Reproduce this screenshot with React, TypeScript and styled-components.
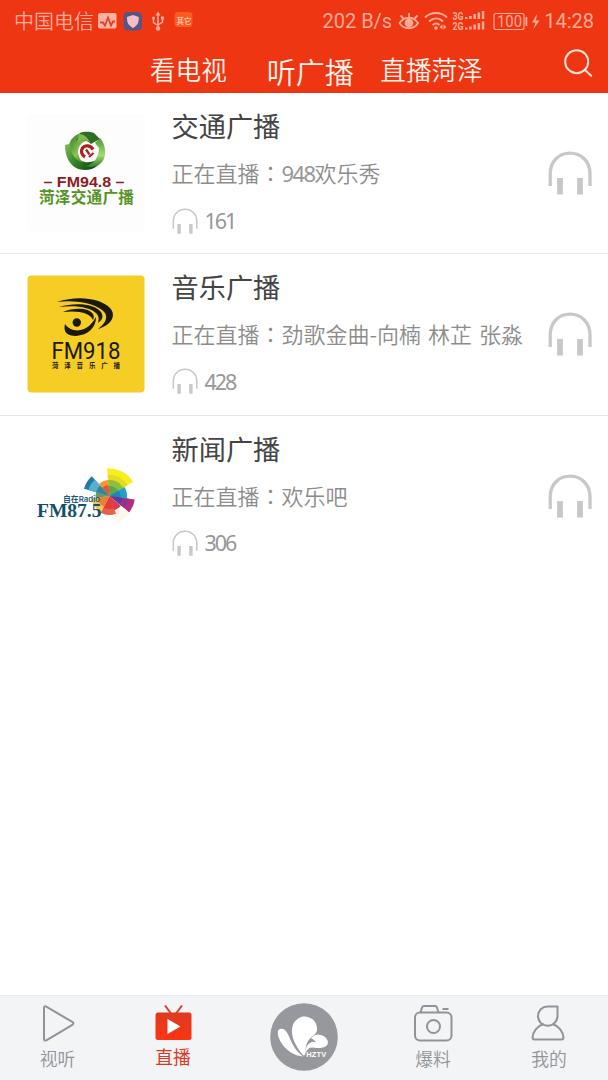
import React from 'react';
import styled, { createGlobalStyle } from 'styled-components';

const Global = createGlobalStyle`
  * { box-sizing: border-box; }
  body { margin: 0; background: #fff; }
`;

const cjk = `'Noto Sans CJK SC', sans-serif`;

const Screen = styled.div`
  display: flex;
  flex-direction: column;
  width: 608px;
  height: 1080px;
  background: #fff;
  font-family: ${cjk};
  font-weight: 350;
  overflow: hidden;
`;

const Header = styled.header`
  height: 92.5px;
  background: #ee3613;
  display: flex;
  flex-direction: column;
`;

const StatusBar = styled.div`
  height: 41px;
  padding: 0 14px 0 14px;
  display: flex;
  align-items: center;
  justify-content: space-between;
  color: #ffab98;
  svg { display: block; }
`;

const StatusGroup = styled.div`
  display: flex;
  align-items: center;
`;

const Carrier = styled.span`
  font-size: 20px;
  line-height: 24px;
  margin-right: 4px;
`;

const StatusText = styled.span<{ $gap: number }>`
  font-family: Roboto, sans-serif;
  font-weight: 400;
  font-size: 20px;
  line-height: 24px;
  margin-right: ${(p) => p.$gap}px;
`;

const NavBar = styled.nav`
  height: 51.5px;
  padding: 0 15px 0 150px;
  display: flex;
  align-items: flex-start;
  color: #fff3ea;
`;

const Tab = styled.a<{ $active?: boolean; $gap?: number }>`
  font-size: ${(p) => (p.$active ? 29 : 25.6)}px;
  line-height: 36px;
  padding-top: ${(p) => (p.$active ? 12 : 10)}px;
  margin-right: ${(p) => p.$gap ?? 0}px;
  white-space: nowrap;
`;

const SearchButton = styled.div`
  margin-left: auto;
  padding-top: 8px;
  svg { display: block; }
`;

const List = styled.main`
  flex: 1;
`;

const Row = styled.article<{ $last?: boolean }>`
  height: 161.5px;
  padding: 21px 16px 0 27px;
  display: flex;
  align-items: flex-start;
  border-bottom: ${(p) => (p.$last ? 'none' : '1px solid #e6e6e6')};
`;

const Cover = styled.div`
  width: 118px;
  height: 118px;
  margin-right: 26.5px;
  flex: none;
  svg { display: block; }
`;

const Info = styled.div`
  flex: 1;
  display: flex;
  flex-direction: column;
  margin-top: -9px;
`;

const Title = styled.h2`
  margin: 0;
  font-size: 27.2px;
  font-weight: 400;
  line-height: 40px;
  color: #444;
`;

const Program = styled.p`
  margin: 10px 0 0;
  font-size: 22px;
  line-height: 34px;
  color: #8c8c8c;
  white-space: nowrap;
  word-spacing: 2px;
`;

const Colon = styled.span`
  font-family: 'Noto Sans CJK TC', sans-serif;
`;

const Digits = styled.span`
  font-family: 'Noto Sans', ${cjk};
  font-weight: 400;
  letter-spacing: -1.6px;
  color: #979797;
`;

const Count = styled(Digits)`
  letter-spacing: -2px;
`;

const Listeners = styled.div`
  margin-top: 16px;
  height: 30px;
  display: flex;
  align-items: center;
  gap: 7px;
  font-size: 21.5px;
`;

const Listen = styled.div`
  margin-top: 37px;
  svg { display: block; }
`;

const TabBar = styled.footer`
  height: 85px;
  background: #f3f4f6;
  border-top: 1px solid #ececec;
  display: grid;
  grid-template-columns: 115px 116px 145px 114px 118px;
`;

const TabItem = styled.div<{ $active?: boolean; $top?: number }>`
  display: flex;
  flex-direction: column;
  align-items: center;
  padding-top: ${(p) => p.$top ?? 8}px;
  color: ${(p) => (p.$active ? '#d93a25' : '#919398')};
  svg { display: block; }
`;

const TabLabel = styled.span<{ $active?: boolean }>`
  font-size: 17.8px;
  line-height: 26px;
  margin-top: ${(p) => (p.$active ? -1 : 1)}px;
  font-weight: ${(p) => (p.$active ? 400 : 350)};
`;

function HeadphoneIcon({ size, small }: { size: number; small?: boolean }) {
  return (
    <svg width={size} height={size} viewBox="0 0 44 44" fill="none">
      <path d="M2.200 35V23C2.200 10 11 2.200 22 2.200s20 7.800 20 20.800v12" stroke="#c8c8c8" strokeWidth={small ? 2.6 : 3.3} />
      <path d="M12 27v16.500M32 27v16.500" stroke="#c8c8c8" strokeWidth="5.800" />
    </svg>
  );
}

function TrafficCover() {
  return (
    <svg width="118" height="118" viewBox="0 0 118 118">
      <defs>
        <linearGradient id="leaf" x1="0" y1="0" x2="1" y2="1">
          <stop offset="0" stopColor="#2f7a22" />
          <stop offset=".5" stopColor="#8cc457" />
          <stop offset="1" stopColor="#1c5c1c" />
        </linearGradient>
        <linearGradient id="leafBottom" x1="0" y1="0" x2="1" y2=".6">
          <stop offset="0" stopColor="#8fc65c" />
          <stop offset=".45" stopColor="#3c8a2c" />
          <stop offset="1" stopColor="#124616" />
        </linearGradient>
        <linearGradient id="leafRight" x1="0" y1="0" x2="0" y2="1">
          <stop offset="0" stopColor="#4b9a34" />
          <stop offset=".6" stopColor="#a6d873" />
          <stop offset="1" stopColor="#2c7a28" />
        </linearGradient>
      </defs>
      <rect width="118" height="118" rx="4" fill="#fdfdfd" />
      <path d="M38 31c0 14 7 25 20 25 10 0 16-6 18-14-6 5-13 7-18 6-9-2-13-11-10-21l-4-1-2 4z" fill="url(#leafBottom)" />
      <path d="M44 26c4-5 9-8 15-7l5 7c-8 0-12 5-13 11 0 5 2 9 5 12-9-3-15-13-12-23z" fill="url(#leaf)" />
      <path d="M53 19c5-2 11-1 14 0l6 6-9 5c-3-3-8-5-15-3z" fill="#2d6f24" />
      <path d="M52 20c5 0 8 3 11 8-4-2-9-2-13 0z" fill="#7fb94f" />
      <path d="M68 29l5-5c6 7 7 18 2 24-4 5-11 6-16 4 8-2 13-9 13-18z" fill="url(#leafRight)" />
      <circle cx="60.500" cy="38.500" r="9" fill="#fbfbf5" />
      <path d="M66 35.500c-2-4-8-5-10.500-1.500-2 3-1 7 2.500 9" fill="none" stroke="#a92126" strokeWidth="3.200" />
      <path d="M59 35.500l3.500 5M62 43l4.500-4" fill="none" stroke="#a92126" strokeWidth="2.200" />
      <text x="57" y="73" textAnchor="middle" fontFamily="Liberation Sans, sans-serif" fontWeight="700" fontSize="15" fill="#8c1c23" textLength="81" lengthAdjust="spacingAndGlyphs">– FM94.8 –</text>
      <text x="12" y="88.500" fontFamily={cjk} fontWeight="700" fontSize="15.700" fill="#559326" textLength="95">菏泽交通广播</text>
    </svg>
  );
}

function MusicCover() {
  return (
    <svg width="118" height="118" viewBox="0 0 118 118">
      <rect x=".5" y=".5" width="117" height="117" rx="4" fill="#f5cd24" />
      <g fill="#1b180c">
        <path d="M30 27C50 20 74 23 83 33c7 8 1 17-12 21 7-5 10-11 7-16C71 29 50 24.500 30 27z" />
        <path d="M32 32c17-5 36-3 42 5 3 5 1 8-3 11 1-4 1-6-1-9-6-7-22-9-38-7z" />
        <path d="M36 37c12-5 26-4 30 2 1 2 1 4 0 6-2-7-15-10-30-8z" />
        <circle cx="49.800" cy="47.500" r="4.200" />
        <path d="M38 49c4 6 12 8 19 5 5-2 9-7 12-12 0 11-8 18-20 19-9 0-13-4-11-12z" />
      </g>
      <text x="24.500" y="84" fill="#1b180c" fontFamily="Roboto, sans-serif" fontWeight="400" fontSize="24.500" textLength="69" lengthAdjust="spacingAndGlyphs">FM918</text>
      <text x="25" y="93" fontFamily={cjk} fontWeight="700" fontSize="6.500" fill="#1b180c" textLength="68">菏泽音乐广播</text>
    </svg>
  );
}

function wedge(r: number, a1: number, a2: number) {
  const p = (a: number) =>
    `${(r * Math.cos((a * Math.PI) / 180)).toFixed(2)} ${(r * Math.sin((a * Math.PI) / 180)).toFixed(2)}`;
  return `M0 0L${p(a1)}A${r} ${r} 0 0 1 ${p(a2)}Z`;
}

function NewsCover() {
  const wedges: [number, number, number, string][] = [
    [27.5, -95, -31, '#f8ee1c'],
    [21, -95, -31, '#e3dc22'],
    [16, -95, -31, '#8dbf3e'],
    [10, -95, -31, '#5aa648'],
    [17.5, -31, 8, '#1fa0cf'],
    [11, -31, 8, '#1a86bd'],
    [25.5, 8, 40, '#b32d80'],
    [19, 8, 40, '#8b3590'],
    [13, 8, 40, '#5c3c96'],
    [27, 40, 75, '#fef6ea'],
    [15, 40, 80, '#d83a5a'],
    [19, 70, 118, '#e8604a'],
    [13, 70, 118, '#dc4038'],
    [18, 118, 172, '#f7c25a'],
    [12, 118, 172, '#ee7f37'],
    [14, 172, 196, '#6b9d52'],
    [26.5, 196, 228, '#2579a8'],
    [22, 196, 228, '#55b2cc'],
    [14, 196, 228, '#2c86a8'],
    [16, 228, 265, '#f39a2d'],
    [11, 228, 265, '#e6573a'],
  ];
  return (
    <svg width="118" height="118" viewBox="0 0 118 118">
      <g transform="translate(82.500 59)">
        {wedges.map(([r, a, b, c]) => (
          <path key={`${r}-${a}`} d={wedge(r, a, b)} fill={c} />
        ))}
      </g>
      <text x="36" y="65" fontFamily={`Inter, ${cjk}`} fontWeight="600" fontSize="7.800" fill="#1e5974" textLength="37" lengthAdjust="spacingAndGlyphs">自在Radio</text>
      <text x="10" y="80" fontFamily="Liberation Serif, serif" fontWeight="700" fontSize="19.500" fill="#14506b" textLength="64.500" lengthAdjust="spacingAndGlyphs">FM87.5</text>
    </svg>
  );
}

function StatusLeftIcons() {
  return (
    <svg width="100" height="24" viewBox="98 8 100 24">
      <rect x="98" y="12" width="18.500" height="15.500" rx="2" fill="#ffb3a2" />
      <path d="M100 21.500h3l2 3 3-8 3 8 2-4h2" fill="none" stroke="#d9442c" strokeWidth="1.800" />
      <rect x="123.500" y="11" width="18.500" height="18.500" rx="4.500" fill="#575585" />
      <path d="M133 14l5.800 2c0 6-1 8-5.800 11-5-3-6-5-6-11z" fill="#f3bfc4" />
      <path d="M158 13v14M153.500 18v3.500l4.500 3M162.500 17v4l-4.500 3" fill="none" stroke="#ffab98" strokeWidth="1.500" />
      <g fill="#ffab98">
        <path d="M158 10.500l2.500 4h-5z" />
        <circle cx="158" cy="27.500" r="2.200" />
        <circle cx="153.500" cy="17" r="1.600" />
        <rect x="161" y="15.500" width="3" height="3" />
      </g>
      <rect x="174.500" y="11" width="18" height="15" rx="4" fill="#fa5b22" />
      <text x="176.500" y="22.500" fontFamily={cjk} fontWeight="700" fontSize="7.500" fill="#ffc0a6">其它</text>
    </svg>
  );
}

function StatusRightIcons() {
  return (
    <svg width="146" height="24" viewBox="398 8 146 24">
      <g fill="none" stroke="#ffab98" strokeWidth="1.800">
        <path d="M399.500 22c5-7 14-7 18.500 0-4 7-14 7-18.500 0zM400.500 14.500l3 3M409 12v4M417.500 14.500l-3 3" />
        <path d="M425 16.500c6-6 16-6 22 0M429 20.500c4.500-4 10-4 14 0M432.500 24c2.500-2 5-2 7 0" strokeWidth="2" />
      </g>
      <g fill="#ffab98">
        <circle cx="409" cy="22" r="4.300" />
        <circle cx="436" cy="27" r="1.800" />
        <path d="M439.500 26l3-2.500v5zM443.500 23.500l3 2.500-3 2.500z" />
        <text x="452.500" y="18.500" fontFamily="Roboto, sans-serif" fontWeight="700" fontSize="10" textLength="11" lengthAdjust="spacingAndGlyphs">3G</text>
        <text x="452.500" y="29" fontFamily="Roboto, sans-serif" fontWeight="700" fontSize="10" textLength="11" lengthAdjust="spacingAndGlyphs">2G</text>
        {[18, 28.5].map((y) =>
          [2, 3, 5, 6.5, 8].map((h, i) => (
            <rect key={`${y}-${i}`} x={465 + i * 4.2} y={y - h} width="2.500" height={h} />
          )),
        )}
        <rect x="525.500" y="16" width="1.800" height="9" />
        <path d="M537 13l-5 8.500h3.500l-2 6.500 6-8.500H536z" />
        <text x="497" y="26.300" fontFamily="Roboto, sans-serif" fontWeight="400" fontSize="16" textLength="25" lengthAdjust="spacingAndGlyphs">100</text>
      </g>
      <rect x="494" y="12.500" width="30" height="16" rx="2" fill="none" stroke="#ffab98" strokeWidth="1.200" />
    </svg>
  );
}

const stations = [
  { title: '交通广播', digits: '948', program: '欢乐秀', count: '161', Art: TrafficCover },
  { title: '音乐广播', digits: '', program: '劲歌金曲-向楠 林芷 张淼', count: '428', Art: MusicCover },
  { title: '新闻广播', digits: '', program: '欢乐吧', count: '306', Art: NewsCover },
];

export default function App() {
  return (
    <Screen>
      <Global />
      <Header>
        <StatusBar>
          <StatusGroup>
            <Carrier>中国电信</Carrier>
            <StatusLeftIcons />
          </StatusGroup>
          <StatusGroup>
            <StatusText $gap={6}>202 B/s</StatusText>
            <StatusRightIcons />
            <StatusText $gap={0}>14:28</StatusText>
          </StatusGroup>
        </StatusBar>
        <NavBar>
          <Tab $gap={40}>看电视</Tab>
          <Tab $active $gap={26.5}>听广播</Tab>
          <Tab>直播菏泽</Tab>
          <SearchButton>
            <svg width="29" height="29" viewBox="0 0 29 29" fill="none" stroke="#ffe3d5" strokeWidth="2">
              <circle cx="12.700" cy="12.700" r="11.500" />
              <path d="M21.200 21.200l6 5.500" strokeLinecap="round" />
            </svg>
          </SearchButton>
        </NavBar>
      </Header>
      <List>
        {stations.map(({ title, digits, program, count, Art }, i) => (
          <Row key={title} $last={i === stations.length - 1}>
            <Cover><Art /></Cover>
            <Info>
              <Title>{title}</Title>
              <Program>正在直播<Colon lang="zh-TW">：</Colon>{digits && <Digits>{digits}</Digits>}{program}</Program>
              <Listeners>
                <HeadphoneIcon size={26} small />
                <Count>{count}</Count>
              </Listeners>
            </Info>
            <Listen><HeadphoneIcon size={44} /></Listen>
          </Row>
        ))}
      </List>
      <TabBar>
        <TabItem>
          <svg width="38" height="40" viewBox="0 0 38 40" fill="none" stroke="currentColor" strokeWidth="2" strokeLinejoin="round">
            <path d="M5 4v31c0 1.500 1 2 2.300 1.300l26-15.500c1.500-.9 1.500-2 0-2.900L7.300 2.700C6 1.900 5 2.500 5 4z" />
          </svg>
          <TabLabel>视听</TabLabel>
        </TabItem>
        <TabItem $active>
          <svg width="38" height="40" viewBox="0 0 38 40">
            <defs>
              <linearGradient id="tv" x1="0" y1="0" x2="0" y2="1">
                <stop offset="0" stopColor="#de3a20" />
                <stop offset="1" stopColor="#fb3511" />
              </linearGradient>
            </defs>
            <path d="M11 1.500l6 8M28 1.500l-6 8" stroke="#c9402f" strokeWidth="2" />
            <rect x="1.500" y="8.500" width="36" height="27.500" rx="2.500" fill="url(#tv)" />
            <path d="M13.500 15v15l13-7.500z" fill="#fff" />
          </svg>
          <TabLabel $active>直播</TabLabel>
        </TabItem>
        <TabItem $top={6.5}>
          <svg width="68" height="68" viewBox="0 0 68 68">
            <circle cx="34" cy="34" r="33.800" fill="#97989d" />
            <g fill="#fff">
              <path d="M33.500 53.500C24 53 15 47 10.500 38.500c-3-6-4.500-12 .5-12.800 5-.5 7 5.300 10 12.300 3 6.500 6.500 11.500 12.500 15.500z" />
              <path d="M33 52C26 44 21 34 22 26c1-8 7-13 13-12.500 8 .5 13 7 12 14-1 4-4 5-7 8-4 4-5 11-4 13l-1.500 4z" />
              <path d="M36 49c-1-4 1-7 4-9 2-1.500 4-1.500 6-.5-1-2-3-3.500-5-4 3-4.500 8-5 12.500-2.500 5 3 6 8 2 10.500-5 2.500-11 1-14 1-2 0-4 2-5.500 4.500z" />
            </g>
            <text x="36.300" y="54" fontFamily="Liberation Sans, sans-serif" fontWeight="700" fontSize="7.500" fill="#fff" textLength="20">HZTV</text>
          </svg>
        </TabItem>
        <TabItem>
          <svg width="40" height="40" viewBox="0 0 40 40" fill="none" stroke="currentColor" strokeWidth="2">
            <rect x="2" y="8.500" width="36.500" height="28" rx="5" />
            <path d="M7.500 8.500l1.500-5c.3-1 1-1.500 2-1.500h11c1 0 1.700.5 2 1.500l1.500 5M29.500 5h6" />
            <circle cx="20.500" cy="22.500" r="6.500" />
          </svg>
          <TabLabel>爆料</TabLabel>
        </TabItem>
        <TabItem>
          <svg width="38" height="40" viewBox="0 0 38 40" fill="none" stroke="currentColor" strokeWidth="2" strokeLinejoin="round">
            <path d="M27.500 2.500H17.500A9.500 9.500 0 0 0 8 12a9.700 9.700 0 0 0 19.500 0z" />
            <path d="M13.500 20C7 22 3 28 2.500 33.500c0 1.300.7 2 2 2h27c1.400 0 2-.7 2-2C33 28 29 22 22.500 20" />
          </svg>
          <TabLabel>我的</TabLabel>
        </TabItem>
      </TabBar>
    </Screen>
  );
}
